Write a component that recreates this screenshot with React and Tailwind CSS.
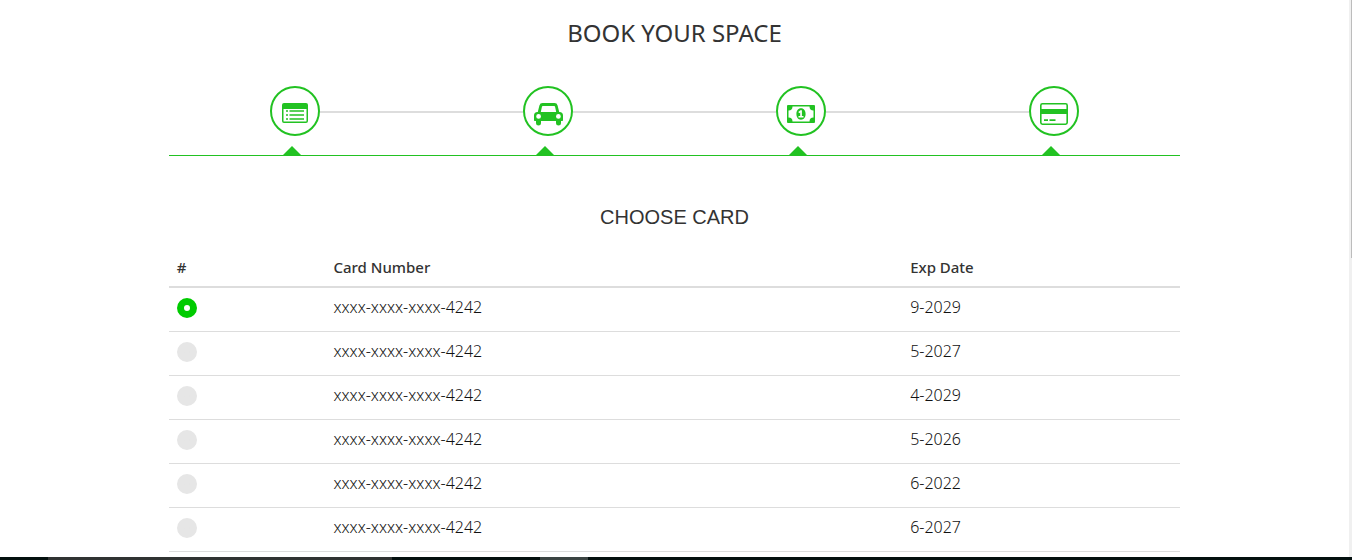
import React, { useState } from "react";

const cards = ["9-2029", "5-2027", "4-2029", "5-2026", "6-2022", "6-2027"];

function ListIcon() {
  return (
    <svg viewBox="0 0 26 22" className="h-[22px] w-[26px]" fill="currentColor" aria-hidden="true">
      <path fillRule="evenodd" d="M2 0H24Q26 0 26 2V18Q26 20 24 20H2Q0 20 0 18V2Q0 0 2 0ZM1.500 6V17.900Q1.500 18.500 2.100 18.500H23.900Q24.500 18.500 24.500 17.900V6Z" />
      <path d="M4 7.3h2v1.4H4zM4 11.3h2v1.4H4zM4 15.3h2v1.4H4zM7.5 7.3H22v1.4H7.5zM7.5 11.3H22v1.4H7.5zM7.5 15.3H22v1.4H7.5z" />
    </svg>
  );
}

function CarIcon() {
  return (
    <svg viewBox="0 0 29 23" className="h-[23px] w-[29px]" fill="currentColor" aria-hidden="true">
      <path fillRule="evenodd" d="M8.5 0H20.5Q23 0 23.6 2.4L25.2 9H25.5Q29 9.4 29 12.5V17.3Q29 18 28.3 18H27V20.2Q27 22.6 24.5 22.6T22 20.2V18H7V20.2Q7 22.6 4.5 22.6T2 20.2V18H.7Q0 18 0 17.3V12.5Q0 9.4 3.5 9H3.8L5.4 2.4Q6 0 8.5 0ZM8.8 3Q8.2 3 8 3.6L6.800 9H22.200L21 3.600Q20.800 3 20.200 3ZM4.600 11A2.400 2.400 0 1 0 4.600 15.800A2.400 2.400 0 1 0 4.600 11ZM24.400 11A2.400 2.400 0 1 0 24.400 15.800A2.400 2.400 0 1 0 24.400 11Z" />
    </svg>
  );
}

function MoneyIcon() {
  return (
    <svg viewBox="0 0 28 18" className="h-[18px] w-7" fill="currentColor" aria-hidden="true">
      <path fillRule="evenodd" d="M1 0H27Q28 0 28 1V17Q28 18 27 18H1Q0 18 0 17V1Q0 0 1 0ZM5.500 1.500Q5.500 5.500 1.500 5.500V12.500Q5.500 12.500 5.500 16.500H22.500Q22.500 12.500 26.500 12.500V5.500Q22.500 5.500 22.500 1.500ZM14 3.300C17 3.300 18.600 6 18.600 9S17 14.700 14 14.700S9.400 12 9.400 9S11 3.300 14 3.300ZM13.400 5.200L11.300 7.100L12.300 8.200L13.200 7.500V11H11.500V12.500H16.500V11H14.900V5.200Z" />
    </svg>
  );
}

function CardIcon() {
  return (
    <svg viewBox="0 0 28 22" className="h-[22px] w-7" fill="currentColor" aria-hidden="true">
      <path fillRule="evenodd" d="M2.400 0H25.600Q28 0 28 2.400V19.600Q28 22 25.600 22H2.400Q0 22 0 19.600V2.400Q0 0 2.400 0ZM2.400 1.600Q1.600 1.600 1.600 2.400V6H26.400V2.400Q26.400 1.600 25.600 1.600ZM1.600 11V19.600Q1.600 20.400 2.400 20.400H25.600Q26.400 20.400 26.400 19.600V11Z" />
      <path d="M4 16.300h4v1.700H4zM9.500 16.300h6v1.700H9.500z" />
    </svg>
  );
}

const steps = [
  { label: "Details", Icon: ListIcon },
  { label: "Vehicle", Icon: CarIcon },
  { label: "Payment", Icon: MoneyIcon },
  { label: "Card", Icon: CardIcon },
];

function Steps() {
  return (
    <ol className="mt-[37px] grid grid-cols-4 border-b border-[#22c222]">
      {steps.map(({ label, Icon }, i) => (
        <li key={label} className="flex flex-col items-center">
          <div className="flex w-full items-center">
            <span className={i > 0 ? "mt-0.5 h-0.5 flex-1 bg-[#dddddd]" : "h-0.5 flex-1"} />
            <button type="button" aria-label={label} className="flex size-[50px] items-center justify-center rounded-full border-2 border-[#22c222] pt-1.5 text-[#22c222]">
              <Icon />
            </button>
            <span className={i < 3 ? "mt-0.5 h-0.5 flex-1 bg-[#dddddd]" : "h-0.5 flex-1"} />
          </div>
          <svg viewBox="0 0 18 9" className="mt-2.5 mr-1.5 h-[9px] w-[18px]" fill="#22c222" aria-hidden="true">
            <path d="M0 9L9 0L18 9Z" />
          </svg>
        </li>
      ))}
    </ol>
  );
}

function CardTable() {
  const [selected, setSelected] = useState(0);
  return (
    <table className="mt-[18px] w-full table-fixed text-left text-base leading-6">
      <colgroup>
        <col className="w-[15.5%]" />
        <col className="w-[57%]" />
        <col />
      </colgroup>
      <thead>
        <tr className="h-10 border-b-2 border-[#dddddd] text-[15px]">
          <th className="px-2 font-medium">#</th>
          <th className="px-2 font-medium">Card Number</th>
          <th className="px-2 font-medium">Exp Date</th>
        </tr>
      </thead>
      <tbody className="font-light text-[#111111]">
        {cards.map((date, i) => (
          <tr key={i} className="h-11 border-b border-[#dddddd]">
            <td className="px-2 pb-0.5">
              <input
                type="radio"
                name="card"
                aria-label={"Card expiring " + date}
                checked={selected === i}
                onChange={() => setSelected(i)}
                className="block size-5 appearance-none rounded-full border-[7px] border-[#e6e6e6] bg-[#e6e6e6] checked:border-[#00cb00] checked:bg-white"
              />
            </td>
            <td className="px-2 pb-1">xxxx-xxxx-xxxx-4242</td>
            <td className="px-2 pb-1">{date}</td>
          </tr>
        ))}
      </tbody>
    </table>
  );
}

export default function App() {
  return (
    <div className="h-screen overflow-hidden bg-white pr-[3px] font-['Noto_Sans',sans-serif] text-[#333333]">
      <main className="mx-auto w-3/4 pt-[17px]">
        <h1 className="text-center text-2xl leading-8 font-normal">BOOK YOUR SPACE</h1>
        <Steps />
        <h2 className="mt-[49px] text-center font-['Liberation_Sans',sans-serif] text-xl leading-6">CHOOSE CARD</h2>
        <CardTable />
      </main>
      <div className="fixed inset-y-0 right-0 w-[3px] bg-[#f0f0f0]">
        <div className="ml-auto h-[46%] w-px bg-[#bcbcbc]" />
      </div>
      <div className="fixed inset-x-0 bottom-0 flex h-[3px] bg-[#04100f]">
        <span className="w-12" />
        <span className="w-[344px] bg-[#303332]" />
        <span className="w-[148px]" />
        <span className="w-12 bg-[#3b4443]" />
      </div>
    </div>
  );
}
